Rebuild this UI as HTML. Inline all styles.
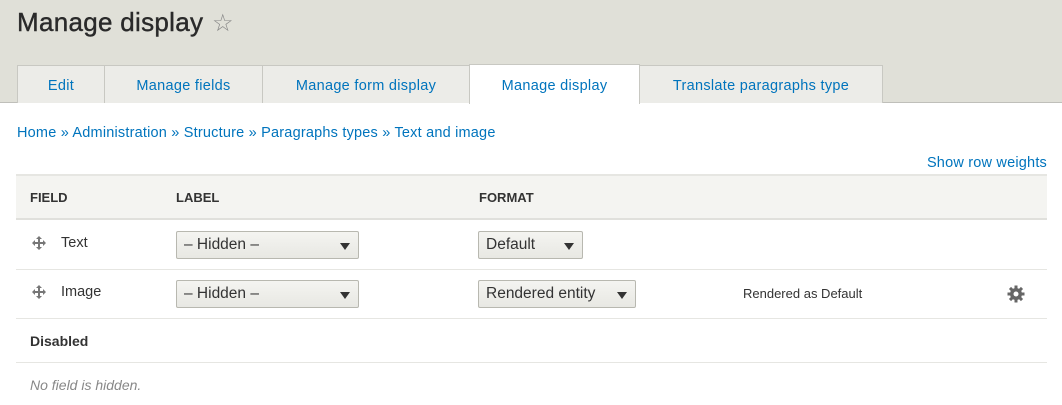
<!DOCTYPE html>
<html><head><style>
*{margin:0;padding:0;box-sizing:border-box}
body{width:1062px;height:405px;background:#fff;font-family:"Liberation Sans",sans-serif;color:#333;position:relative;overflow:hidden;font-size:14px}
.hdr{position:absolute;left:0;top:0;width:1062px;height:103px;background:#e0e0d8;border-bottom:1px solid #bfbfba}
.title{position:absolute;left:17px;top:7px;font-size:26px;color:#2a2a2a;letter-spacing:0.3px;-webkit-text-stroke:0.4px #2a2a2a}
.star{position:absolute;left:212px;top:9px;font-size:24px;color:#888}
.tab{position:absolute;top:65px;height:38px;background:#ecece8;border:1px solid #c8c8c2;border-bottom:none;color:#0074bd;font-size:14.5px;text-align:center;line-height:40px;letter-spacing:0.3px}
.tab.act{background:#fff;top:64px;height:40px;border-color:#c8c8c2;line-height:42px}
a{color:#0074bd;text-decoration:none}
.bc{position:absolute;left:17px;top:125px;font-size:14.5px;color:#0074bd;letter-spacing:0.2px}
.srw{position:absolute;right:15px;top:155px;font-size:14.5px;color:#0074bd;letter-spacing:0.2px}
.thead{position:absolute;left:16px;top:174px;width:1031px;height:46px;background:#f4f4f1;border-top:2px solid #e6e6e2;border-bottom:2px solid #e0e0dc}
.th{position:absolute;top:190px;font-size:13px;font-weight:bold;color:#333}
.line{position:absolute;left:16px;width:1031px;height:1px;background:#e6e6e2}
.cell{position:absolute;font-size:14.5px;color:#333}
.sel{position:absolute;height:28px;border:1px solid #b8b8b0;border-radius:2px;background:linear-gradient(#f4f4f1,#e8e8e3);font-size:15.5px;line-height:26px;padding-left:7px;color:#333}
.sel:after{content:"";position:absolute;right:8px;top:11px;border-left:5px solid transparent;border-right:5px solid transparent;border-top:7px solid #333}
.drag{position:absolute;width:16px;height:16px}
</style></head><body>
<div class="hdr"></div>
<div class="title">Manage display</div>
<div class="star">☆</div>
<div class="tab" style="left:17px;width:88px">Edit</div>
<div class="tab" style="left:104px;width:159px">Manage fields</div>
<div class="tab" style="left:262px;width:208px">Manage form display</div>
<div class="tab act" style="left:469px;width:171px">Manage display</div>
<div class="tab" style="left:639px;width:244px">Translate paragraphs type</div>
<div class="bc">Home » Administration » Structure » Paragraphs types » Text and image</div>
<div class="srw">Show row weights</div>
<div class="thead"></div>
<div class="th" style="left:30px">FIELD</div>
<div class="th" style="left:176px">LABEL</div>
<div class="th" style="left:479px">FORMAT</div>

<svg class="drag" style="left:31px;top:235px" viewBox="0 0 16 16"><path d="M8 1l-3 3h2v3H4V5L1 8l3 3V9h3v3H5l3 3 3-3H9V9h3v2l3-3-3-3v2H9V4h2z" fill="#777"/></svg>
<div class="cell" style="left:61px;top:235px">Text</div>
<div class="sel" style="left:176px;top:231px;width:183px">– Hidden –</div>
<div class="sel" style="left:478px;top:231px;width:105px">Default</div>
<div class="line" style="top:269px"></div>

<svg class="drag" style="left:31px;top:284px" viewBox="0 0 16 16"><path d="M8 1l-3 3h2v3H4V5L1 8l3 3V9h3v3H5l3 3 3-3H9V9h3v2l3-3-3-3v2H9V4h2z" fill="#777"/></svg>
<div class="cell" style="left:61px;top:284px">Image</div>
<div class="sel" style="left:176px;top:280px;width:183px">– Hidden –</div>
<div class="sel" style="left:478px;top:280px;width:158px">Rendered entity</div>
<div class="cell" style="left:743px;top:286px;font-size:13px">Rendered as Default</div>
<svg style="position:absolute;left:1007px;top:285px" width="18" height="18" viewBox="0 0 18 18"><g fill="#666"><circle cx="9" cy="9" r="6"/><rect x="7.5" y="0.5" width="3" height="17"/><rect x="0.5" y="7.5" width="17" height="3"/><rect x="7.5" y="0.5" width="3" height="17" transform="rotate(45 9 9)"/><rect x="7.5" y="0.5" width="3" height="17" transform="rotate(-45 9 9)"/></g><circle cx="9" cy="9" r="2.5" fill="#fff"/></svg>
<div class="line" style="top:318px"></div>
<div class="cell" style="left:30px;top:333px;font-size:14px;font-weight:bold">Disabled</div>
<div class="line" style="top:362px"></div>
<div class="cell" style="left:30px;top:377px;font-style:italic;color:#888;font-size:14px">No field is hidden.</div>
</body></html>
